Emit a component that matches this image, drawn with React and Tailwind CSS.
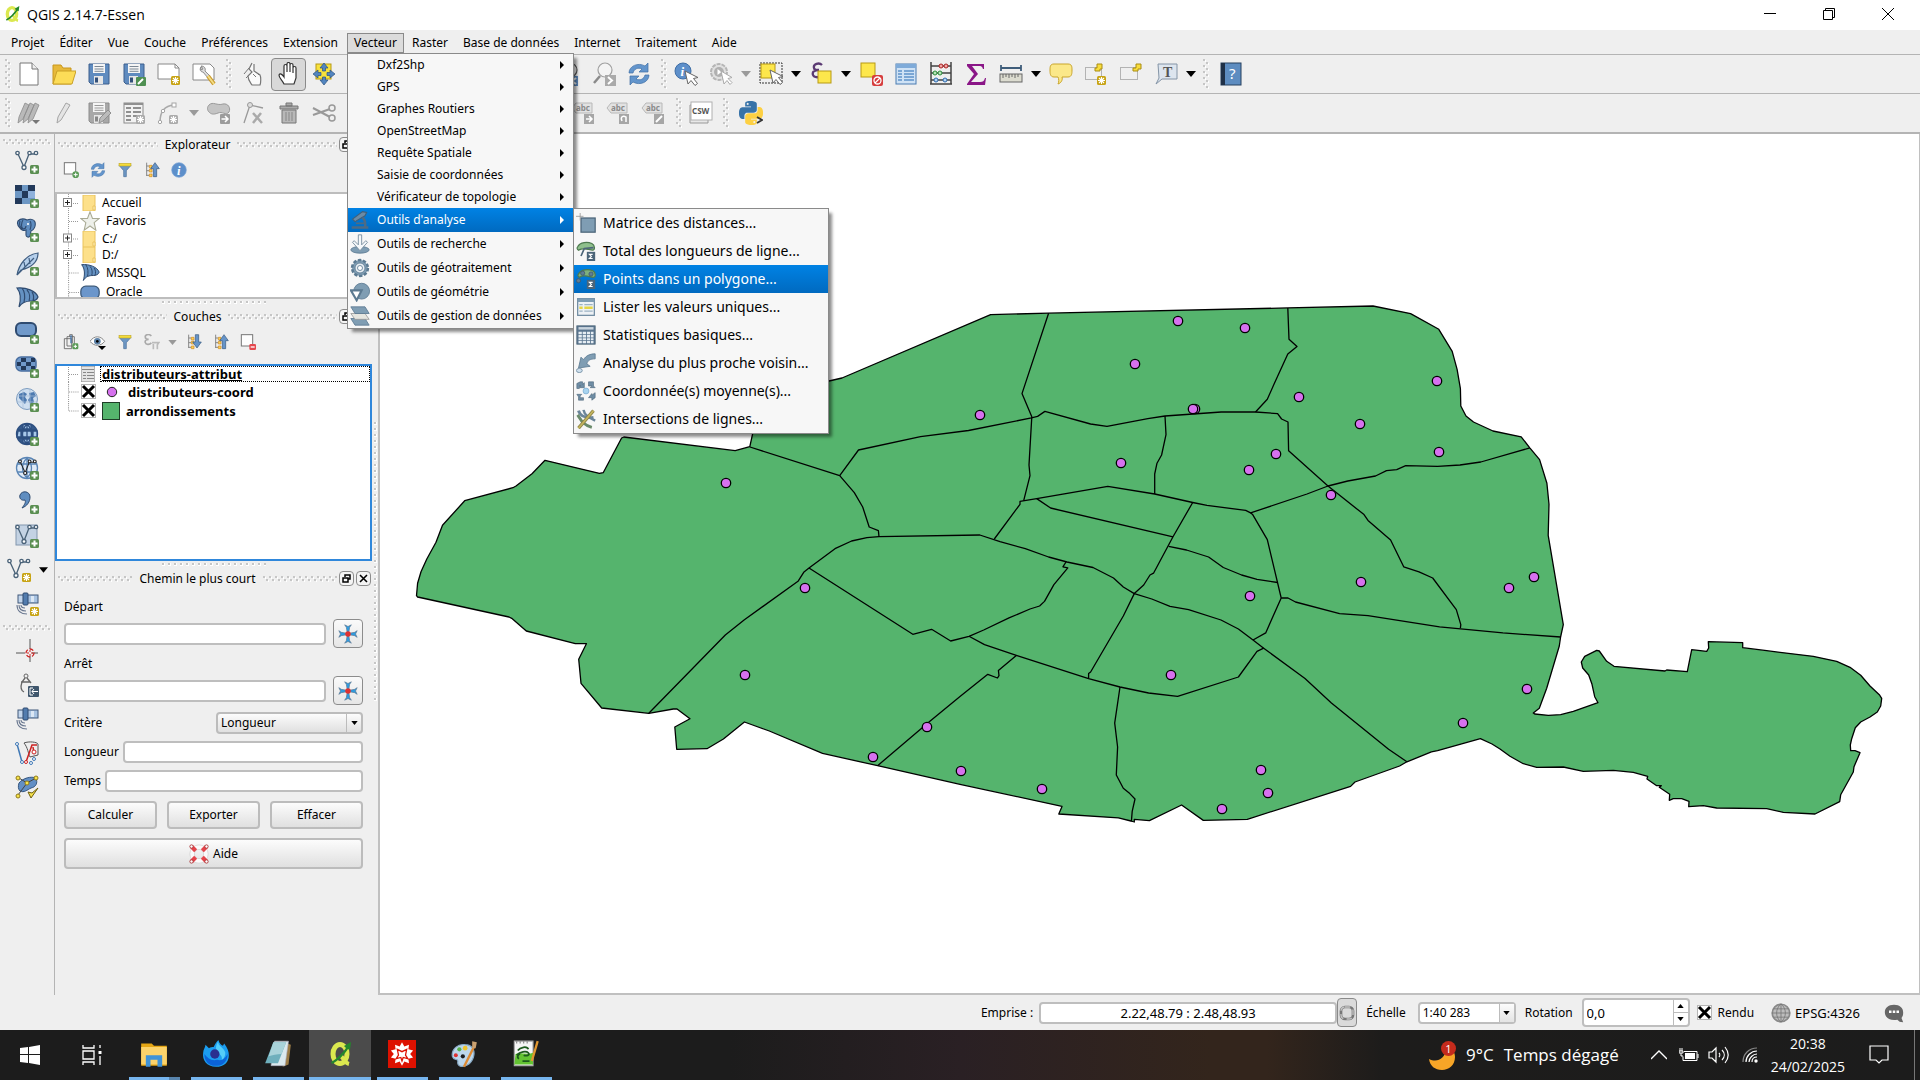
import React from "react";

const UI = "font-['Noto_Sans','Open_Sans',sans-serif]";
const SEGOE = "font-['Open_Sans','Noto_Sans',sans-serif]";

/* ---------- shared drawing helpers ---------- */

function Ic({ children, className = "h-6 w-6", vb = "0 0 24 24" }) {
  return (
    <svg viewBox={vb} className={`shrink-0 ${className}`} fill="none" aria-hidden="true">
      {children}
    </svg>
  );
}

function PatternDefs() {
  return (
    <svg className="absolute h-0 w-0" aria-hidden="true">
      <defs>
        <pattern id="grip" width="6" height="6" patternUnits="userSpaceOnUse">
          <rect x="0" y="0" width="2" height="2" fill="#c6c6c6" />
          <rect x="2" y="1" width="1" height="2" fill="#fff" />
          <rect x="3" y="3" width="2" height="2" fill="#c6c6c6" />
          <rect x="5" y="4" width="1" height="2" fill="#fff" />
        </pattern>
        <pattern id="dots" width="6" height="6" patternUnits="userSpaceOnUse">
          <rect x="0" y="1" width="3" height="3" fill="#fff" />
          <rect x="0" y="1" width="2" height="2" fill="#c6c6c6" />
        </pattern>
      </defs>
    </svg>
  );
}

function Fill({ id, className }) {
  return (
    <svg className={className} aria-hidden="true">
      <rect width="100%" height="100%" fill={`url(#${id})`} />
    </svg>
  );
}

const Plus = ({ x = 15, y = 15 }) => (
  <g transform={`translate(${x} ${y})`}>
    <rect width="9" height="9" rx="1.5" fill="#5b8f52" />
    <path d="M4.5 1.5v6M1.5 4.5h6" stroke="#fff" strokeWidth="2" />
  </g>
);
const Star = ({ x = 15, y = 15, c = "#c8a415" }) => (
  <g transform={`translate(${x} ${y})`}>
    <rect width="9" height="9" rx="1.5" fill={c} />
    <path d="M4.5 1v7M1 4.5h7M2 2l5 5M7 2l-5 5" stroke="#fff" strokeWidth="1.1" />
  </g>
);
const GoArrow = ({ x = 14, y = 14, c = "#9c9c9c" }) => (
  <g transform={`translate(${x} ${y})`}>
    <rect width="10" height="10" rx="1" fill={c} />
    <path d="M1.5 5h6M5 2l3 3-3 3" stroke="#fff" strokeWidth="1.5" />
  </g>
);
const Cursor = ({ x = 10, y = 9 }) => (
  <path transform={`translate(${x} ${y})`} d="M0 0l3 13 3-3.500 4 5 2.500-2-4-5 4.500-1z" fill="#fff" stroke="#666" strokeWidth="1" />
);
const Refresh = () => (
  <g fill="#6395cc" stroke="#3f6ea5" strokeWidth=".7">
    <path d="M2 11C2 4 11 0 18 4l3-3v9h-9l3-3C11 5 7 7 6 11z" />
    <path d="M22 13c0 7-9 11-16 7l-3 3v-9h9l-3 3c4 2 8 0 9-4z" />
  </g>
);
const VNodes = ({ c = "#4a6278" }) => (
  <g stroke={c} strokeWidth="1.3" fill="#fff">
    <path d="M3 4l6 13 5-13h7" fill="none" />
    <circle cx="2.5" cy="3" r="1.7" />
    <circle cx="9" cy="17.5" r="2" />
    <circle cx="14.5" cy="3" r="1.7" />
    <circle cx="21" cy="3" r="1.7" />
  </g>
);
const Funnel = () => (
  <g>
    <path d="M3 5h18l-7 8v9h-4v-9z" fill="#6d97c4" stroke="#4a6f9c" />
    <rect x="3" y="2" width="18" height="4" fill="#f4dc3c" stroke="#b9a01c" strokeWidth=".8" />
  </g>
);
const TreeArrow = ({ down }) => (
  <g>
    <path d="M4 1v20M4 6h4M4 13h4M4 20h4" stroke="#777" strokeWidth="1.3" />
    <path d="M8 5h4v4H8zM8 11h4v4H8zM8 18h4v4H8z" fill="#fbd25a" stroke="#d28a1c" />
    {down ? (
      <path d="M14 1h5v11h4l-6.500 9L10 12h4z" fill="#6694c8" stroke="#35577f" />
    ) : (
      <path d="M14 22h5V10h4L16.500 1 10 10h4z" fill="#6694c8" stroke="#35577f" />
    )}
  </g>
);
const Satellite = ({ children }) => (
  <g>
    <rect x="3" y="3" width="6" height="8" fill="#c3d6ec" stroke="#41597a" />
    <rect x="12" y="3" width="11" height="8" fill="#a8c3e2" stroke="#41597a" />
    <rect x="16" y="4" width="3" height="6" fill="#dbe7f4" />
    <rect x="8" y="1" width="5" height="12" rx="1" fill="#527cae" stroke="#2f4b70" />
    <path d="M10 16c-3 0-4-1-4-3M11 19c-5 0-7-2-7-6M12 22c-6 0-10-3-10-9" stroke="#6a7890" strokeWidth="1.1" />
    {children}
  </g>
);
const Lens = ({ c = "#8a8a8a", h = "#a0a0a0" }) => (
  <g>
    <circle cx="13" cy="8" r="7" fill="#f4f4f4" stroke={h} strokeWidth="1.2" />
    <path d="M8 14l-6 7" stroke={c} strokeWidth="2.5" />
  </g>
);
const Elephant = () => (
  <g stroke="#2f4b70" strokeWidth="1.1">
    <path d="M3 3c3-3 7-2 9-1 3-1 7-1 8 2 1 4-1 8-4 9l-1 5c-1 2-4 1-4-1v-5c-2 1-5 0-6-2-2-2-3-5-2-7z" fill="#5f8dc0" />
    <path d="M8 2c-2 3-2 7 0 9 2 0 3-1 3-3M15 3c2 3 1 6 0 9M5 3c-1 3 0 6 2 8" fill="none" />
    <circle cx="13" cy="6" r="1" fill="#fff" stroke="none" />
  </g>
);
const Sail = () => (
  <path d="M2 2c9-1 19 3 21 9-1 3-4 4-7 4-5 0-9 1-12 6C6 14 6 7 2 2zM7 2c3 4 3 10 2 14M12 4c3 3 3 8 2 11M17 6c2 3 2 6 1 9" fill="#6491c2" stroke="#2f4b70" strokeWidth="1.2" />
);
const Globe = ({ dark }) => (
  <g stroke={dark ? "#2d4f80" : "#5a85b5"} strokeWidth="1.3">
    <circle cx="12" cy="12" r="10.5" fill={dark ? "#35598a" : "#dfeaf6"} />
    {dark && <path d="M8 3c2-1 6-1 8 0v4H8zM7 9h10v6H7zM3 9h3v6H2zM18 9h4v6h-4zM8 17h8v4H8z" fill="#a7c8ea" />}
    <path d="M2 8h20M2 16h20M12 2v20M12 2c-6 6-6 14 0 20M12 2c6 6 6 14 0 20" />
  </g>
);
const Disk = ({ g }) => (
  <g>
    <path d="M2 2h20v20H4l-2-2z" fill={g ? "#a8a8a8" : "#5f8bbf"} stroke={g ? "#8c8c8c" : "#3c5f8d"} />
    <rect x="6" y="2" width="12" height="9" fill="#f5f5f5" />
    <path d="M7.500 4.500h9M7.500 7h9M7.500 9.300h9" stroke={g ? "#999" : "#7b8794"} />
    <rect x="7" y="14" width="9" height="8" fill="#e6e6e6" />
    <rect x="8" y="15.5" width="3" height="5" fill={g ? "#888" : "#33507a"} />
  </g>
);
const AbcTag = ({ children }) => (
  <Ic vb="0 0 26 26" className="h-[26px] w-[26px]">
    <path d="M1 8l4-5h16v10H5z" fill="#e2e2e2" stroke="#b8b8b8" />
    <text x="5" y="11" fontSize="8" fontWeight="bold" fill="#8a8a8a" fontFamily="Noto Sans, sans-serif">abc</text>
    <rect x="13" y="14" width="10" height="10" fill="#a6a6a6" />
    {children}
  </Ic>
);

/* ---------- toolbar pieces ---------- */

function Tool({ label, active, children }) {
  return (
    <button
      type="button"
      title={label}
      aria-label={label}
      className={
        active
          ? "flex h-[33px] w-[35px] shrink-0 items-center justify-center rounded-sm border border-[#8a8a8a] bg-[#d8d8d8]"
          : "flex h-[33px] w-[35px] shrink-0 items-center justify-center"
      }
    >
      {children}
    </button>
  );
}

function Drop({ gray, label = "Options" }) {
  return (
    <button type="button" aria-label={label} className="flex h-[33px] w-[15px] shrink-0 items-center justify-center">
      <svg viewBox="0 0 10 6" className="h-[6px] w-[10px]">
        <path d="M0 0h10L5 6z" fill={gray ? "#9a9a9a" : "#000"} />
      </svg>
    </button>
  );
}

function Grip({ wide, first }) {
  return (
    <div className={wide ? "flex w-[15px] shrink-0 justify-end pr-1" : first ? "flex w-[11px] shrink-0 justify-end" : "flex w-3 shrink-0 justify-end pr-px"}>
      <Fill id="grip" className="h-[30px] w-[6px]" />
    </div>
  );
}

function ToolbarOne() {
  return (
    <div className="flex h-[39px] items-center border-t border-[#b4b4b4]">
      <Grip first />
      <Tool label="Nouveau"><Ic><path d="M3 1h12l6 6v16H3z" fill="#fff" stroke="#777" /><path d="M15 1v6h6" fill="#eee" stroke="#777" /></Ic></Tool>
      <Tool label="Ouvrir"><Ic><path d="M1 3h8l2 3h8v16H1z" fill="#e7b93b" stroke="#c9971d" /><path d="M5 9h19l-4 13H1z" fill="#fcdc57" stroke="#c9a027" /></Ic></Tool>
      <Tool label="Enregistrer"><Ic><Disk /></Ic></Tool>
      <Tool label="Enregistrer sous"><Ic><Disk /><rect x="14" y="15" width="10" height="9" rx="1" fill="#4f9052" /><path d="M16 22l5-5" stroke="#fff" strokeWidth="2" /></Ic></Tool>
      <Tool label="Nouveau composeur"><Ic><path d="M1 2h17l4 4v11H1z" fill="#fff" stroke="#888" /><path d="M18 2v4h4" stroke="#888" /><Star x={14} y={14} /></Ic></Tool>
      <Tool label="Gestionnaire de composeurs"><Ic><path d="M1 2h17l4 4v12H1z" fill="#fff" stroke="#888" /><path d="M9 5c-2 3 0 5 2 5l5 6 2-2-5-5c1-3-1-5-4-5l2 3-2 1z" fill="#ddd" stroke="#777" strokeWidth=".8" /><path d="M16 14l6 8" stroke="#c99a2d" strokeWidth="4" /><path d="M16 14l6 8" stroke="#f3dc84" strokeWidth="2" /></Ic></Tool>
      <Grip wide />
      <Tool label="Toucher"><Ic><path d="M10 1l-3 6 3 3-4 4c0 4 2 6 4 9h8c1-3 1-8 0-10l-6-4V2" fill="#fafafa" stroke="#777" strokeWidth="1.2" /><path d="M2 12l5-6M4 16l3-3M11 12l3 3M14 10l3 3" stroke="#777" /></Ic></Tool>
      <Tool label="Se déplacer dans la carte" active><Ic><path d="M7 22c-2-4-5-6-5-9 1-2 3-1 5 2V4c0-2 3-2 3 0v6-8c0-2 3-2 3 0v8-7c0-2 3-2 3 0v8-5c0-2 3-2 3 0v10l-2 6z" fill="#fff" stroke="#333" strokeWidth="1.2" /></Ic></Tool>
      <Tool label="Déplacer vers la sélection"><Ic><rect x="4" y="2" width="15" height="15" fill="#f8e23c" stroke="#b79a14" /><g fill="#5285c0" stroke="#2d517e" strokeWidth=".7"><path d="M12 1l4 5h-2.500v3h-3V6H8zM12 23l4-5h-2.500v-3h-3v3H8zM1 12l5-4v2.500h3v3H6V16zM23 12l-5-4v2.500h-3v3h3V16z" /></g></Ic></Tool>
      <Tool label="Zoom +"><Ic><Lens /></Ic></Tool>
      <Tool label="Zoom -"><Ic><Lens /></Ic></Tool>
      <Tool label="Zoom à la résolution native"><Ic><Lens /></Ic></Tool>
      <Tool label="Zoom sur l'étendue"><Ic><Lens /></Ic></Tool>
      <Tool label="Zoom sur la sélection"><Ic><Lens /></Ic></Tool>
      <Tool label="Zoom sur la couche"><Ic><Lens /></Ic></Tool>
      <Tool label="Zoom précédent"><Ic><Lens h="#555" /><rect x="11" y="14" width="10" height="10" fill="#5b87ba" /><path d="M19 16l-4 3 4 3" stroke="#fff" strokeWidth="2" /></Ic></Tool>
      <Tool label="Zoom suivant"><Ic><Lens /><rect x="13" y="13" width="11" height="11" fill="#aaa" /><path d="M16 15l4 3.500-4 3.500" stroke="#fff" strokeWidth="2" /></Ic></Tool>
      <Tool label="Rafraîchir"><Ic><Refresh /></Ic></Tool>
      <Grip />
      <Tool label="Identifier les entités"><Ic><circle cx="9" cy="9" r="8" fill="#5d8fca" stroke="#3f6ea5" /><text x="6.5" y="14" fontSize="13" fontStyle="italic" fontWeight="bold" fill="#fff" fontFamily="Liberation Serif, serif">i</text><Cursor x={11} y={9} /></Ic></Tool>
      <Tool label="Exécuter une action"><Ic><circle cx="10" cy="10" r="8" fill="#e0e0e0" stroke="#b5b5b5" strokeWidth="2" strokeDasharray="4 1" /><circle cx="10" cy="10" r="5" fill="#b0b0b0" /><path d="M8.500 7l4 3-4 3z" fill="#fff" /><path d="M12 9l3 13 3-3.500 3 4 2-2-4-4 4-1z" fill="#fff" stroke="#aaa" /></Ic></Tool>
      <Drop gray />
      <Tool label="Sélectionner des entités"><Ic><rect x="1" y="1" width="22" height="20" stroke="#333" strokeDasharray="2 1" /><rect x="2" y="2" width="14" height="14" fill="#fde74c" stroke="#b79a14" /><Cursor x={11} y={8} /></Ic></Tool>
      <Drop />
      <Tool label="Sélection par expression"><Ic><path d="M13 3c-3-3-9-1-8 3 0 2 2 2 5 2-5 0-7 2-6 5 1 3 7 3 9 0" stroke="#5b3a73" strokeWidth="2.3" /><rect x="9" y="9" width="13" height="12" fill="#fde74c" stroke="#b79a14" /></Ic></Tool>
      <Drop />
      <Tool label="Désélectionner"><Ic><rect x="2" y="1" width="14" height="14" fill="#fde74c" stroke="#b79a14" /><rect x="13" y="13" width="11" height="11" rx="2" fill="#d63d3d" /><circle cx="18.5" cy="18.5" r="3.5" stroke="#fff" strokeWidth="1.3" /><path d="M16 21l5-5" stroke="#fff" strokeWidth="1.3" /></Ic></Tool>
      <Tool label="Table d'attributs"><Ic><rect x="2" y="2" width="20" height="20" fill="#cfe2f5" stroke="#4a7cb2" /><rect x="2" y="2" width="20" height="4" fill="#7fabd9" /><path d="M4 9h4M10 9h10M4 12h4M10 12h10M4 15h4M10 15h10M4 18h4M10 18h10" stroke="#5f93c9" strokeWidth="1.5" /></Ic></Tool>
      <Tool label="Calculatrice de champ"><Ic><path d="M2 0v22M22 0v22M1 22h22M2 4h20M2 11h20M2 18h20" stroke="#444" strokeWidth="1.5" /><g stroke="#a22" fill="#f3a5a5"><circle cx="12" cy="4" r="2" /><circle cx="17" cy="4" r="2" /></g><g stroke="#2b8a3b" fill="#b6e4b6"><circle cx="6" cy="11" r="2" /><circle cx="11" cy="11" r="2" /></g><g stroke="#2d6bb0" fill="#b4d2f0"><circle cx="7" cy="18" r="2" /><circle cx="16" cy="18" r="2" /></g></Ic></Tool>
      <Tool label="Résumé statistique"><Ic><path d="M3 2h17v5h-1c-1-3-2-3-4-3H8l6 8-7 8h9c3 0 4-1 5-4h1l-1 7H3v-1l7-10-7-8z" fill="#8a1687" /></Ic></Tool>
      <Tool label="Mesurer une longueur"><Ic><path d="M2 6h20M2 3v6M22 3v6" stroke="#3f5d7a" strokeWidth="1.8" /><rect x="1" y="12" width="22" height="8" fill="#dcdcd0" stroke="#666" /><path d="M4 12v4M7 12v3M10 12v4M13 12v3M16 12v4M19 12v3" stroke="#666" /></Ic></Tool>
      <Drop />
      <Tool label="Infobulles"><Ic><path d="M5 2h14c4 0 4 3 4 6s0 7-4 7h-6c1 3-1 6-4 7 1-2 1-5 0-7H5c-4 0-4-4-4-7s0-6 4-6z" fill="#fbe889" stroke="#c9a52b" /></Ic></Tool>
      <Tool label="Nouveau signet"><Ic><rect x="1.5" y="5.5" width="16" height="12" stroke="#777" strokeDasharray="1 1" /><path d="M13 2h5v5h-2v2h-5V6h2z" fill="#f8dd3c" stroke="#a98c12" /><Star x={13} y={14} /></Ic></Tool>
      <Tool label="Montrer les signets"><Ic><rect x="1.5" y="5.5" width="17" height="12" stroke="#777" strokeDasharray="1 1" /><path d="M17 2h5v5h-3v2h-5V6h3z" fill="#f8dd3c" stroke="#a98c12" /></Ic></Tool>
      <Tool label="Annotation de texte"><Ic><path d="M4 2h19v15H8l-6 5 3-6z" fill="#dde5ee" stroke="#8494a6" /><text x="9" y="15" fontSize="14" fontWeight="bold" fill="#555" fontFamily="Liberation Serif, serif">T</text></Ic></Tool>
      <Drop />
      <Grip wide />
      <Tool label="Contenu de l'aide"><Ic><rect x="2" y="1" width="20" height="22" fill="#5d8cc0" stroke="#27405f" /><rect x="2" y="1" width="4" height="22" fill="#1f3047" /><text x="10" y="17" fontSize="15" fill="#fff" fontFamily="Noto Sans, sans-serif">?</text></Ic></Tool>
    </div>
  );
}

const PY = "M14.25.18l.9.2.73.26.59.3.45.32.34.34.25.34.16.33.1.3.04.26.02.2-.01.13V8.5l-.05.63-.13.55-.21.46-.26.38-.3.31-.33.25-.35.19-.35.14-.33.1-.3.07-.26.04-.21.02H8.77l-.69.05-.59.14-.5.22-.41.27-.33.32-.27.35-.2.36-.15.37-.1.35-.07.32-.04.27-.02.21v3.06H3.17l-.21-.03-.28-.07-.32-.12-.35-.18-.36-.26-.36-.36-.35-.46-.32-.59-.28-.73-.21-.88-.14-1.05-.05-1.23.06-1.22.16-1.04.24-.87.32-.71.36-.57.4-.44.42-.33.42-.24.4-.16.36-.1.32-.05.24-.01h.16l.06.01h8.16v-.83H6.18l-.01-2.75-.02-.37.05-.34.11-.31.17-.28.25-.26.31-.23.38-.2.44-.18.51-.15.58-.12.64-.1.71-.06.77-.04.84-.02 1.27.05zm-6.3 1.98l-.23.33-.08.41.08.41.23.34.33.22.41.09.41-.09.33-.22.23-.34.08-.41-.08-.41-.23-.33-.33-.22-.41-.09-.41.09z";

function ToolbarTwo() {
  return (
    <div className="flex h-[41px] items-center border-t border-b-2 border-[#b4b4b4]">
      <Grip first />
      <Tool label="Modifications en cours"><Ic><g fill="#b9b9b9" stroke="#8c8c8c" strokeWidth=".8"><path d="M1 22l1-6L8 2l4 2-6 14zM6 22l1-6 6-14 4 2-6 14zM11 22l1-6 6-14 4 2-6 14z" /></g><path d="M15 19h8l-4 4z" fill="#777" /></Ic></Tool>
      <Tool label="Basculer en mode édition"><Ic><path d="M5 22l1-6L14 2l4 2-9 15z" fill="#e4e4e4" stroke="#a5a5a5" /></Ic></Tool>
      <Tool label="Enregistrer les modifications"><Ic><Disk g /><path d="M12 22l1-5 8-8 3 3-8 8z" fill="#bbb" stroke="#8f8f8f" /></Ic></Tool>
      <Tool label="Ajouter une entité"><Ic><rect x="2" y="2" width="19" height="20" fill="#f2f2f2" stroke="#8c8c8c" /><path d="M2 3h19M4 7h5M11 7h8M4 11h5M11 11h8M4 15h5M11 15h4M4 19h5" stroke="#909090" strokeWidth="1.8" /><Star x={14} y={14} c="#ababab" /></Ic></Tool>
      <Tool label="Ajouter une chaîne circulaire"><Ic><path d="M3 21c0-9 3-16 14-17" stroke="#aaa" strokeWidth="1.5" /><g fill="#fff" stroke="#a5a5a5"><circle cx="3" cy="21" r="1.7" /><circle cx="6" cy="10" r="1.7" /><rect x="15" y="2" width="4" height="4" /></g><Star x={12} y={14} c="#ababab" /></Ic></Tool>
      <Drop gray />
      <Tool label="Déplacer l'entité"><Ic><path d="M2 4c4-4 8 1 14-1 5-1 8 4 6 8-3 4-7-1-11 1-5 2-7 1-9-1s-2-5 0-7z" fill="#c4c4c4" stroke="#999" /><GoArrow x={13} y={13} /></Ic></Tool>
      <Tool label="Outil de nœud"><Ic><path d="M2 22L8 4l13 3" stroke="#999" strokeWidth="1.3" /><circle cx="8" cy="4" r="2.5" fill="#ddd" stroke="#999" /><path d="M11 12l9 10M19 12l-8 10" stroke="#aaa" strokeWidth="2.5" /></Ic></Tool>
      <Tool label="Supprimer"><Ic><path d="M3 5h18v3H3zM9 2h6v3H9z" fill="#aaa" stroke="#777" /><path d="M5 9h14v13H5z" fill="#b8b8b8" stroke="#777" /><path d="M9 11v9M12 11v9M15 11v9" stroke="#888" /></Ic></Tool>
      <Tool label="Couper"><Ic><path d="M1 7l17 9M1 14l17-6" stroke="#999" strokeWidth="2" /><g stroke="#999" strokeWidth="1.5"><circle cx="20" cy="7" r="3" /><circle cx="20" cy="17" r="3" /></g></Ic></Tool>
      <Tool label="Copier" />
      <Tool label="Coller" />
      <Grip wide />
      <Tool label="Étiquetage" />
      <Tool label="Options d'étiquetage" />
      <Tool label="Épingler les étiquettes" />
      <Tool label="Afficher les étiquettes" />
      <Tool label="Déplacer une étiquette"><AbcTag><path d="M15 19h6M18 16l3 3-3 3" stroke="#fff" strokeWidth="1.5" /></AbcTag></Tool>
      <Tool label="Pivoter une étiquette"><AbcTag><path d="M16 21c-2-4 1-6 4-4v5" stroke="#fff" strokeWidth="1.5" /></AbcTag></Tool>
      <Tool label="Modifier une étiquette"><AbcTag><path d="M15 22l6-6" stroke="#fff" strokeWidth="2" /></AbcTag></Tool>
      <Grip />
      <Tool label="MetaSearch"><Ic><path d="M1 22V4h18v18z" fill="#e8e8e8" stroke="#999" /><rect x="2" y="1" width="21" height="18" fill="#fff" stroke="#b0b0b0" /><text x="3" y="13" fontSize="8" fontWeight="bold" fill="#555" fontFamily="Noto Sans, sans-serif">CSW</text></Ic></Tool>
      <Grip wide />
      <Tool label="Console Python"><Ic><path d={PY} fill="#3873a8" /><path d={PY} fill="#fdd043" transform="rotate(180 12 12)" /><path d="M18 16l5 3-5 3" stroke="#333" strokeWidth="1.8" /></Ic></Tool>
    </div>
  );
}

const sideTools = [
  ["Ajouter une couche vecteur", <><VNodes /><Plus /></>],
  ["Ajouter une couche raster", <><rect width="20" height="19" x="0" y="1" fill="#6d97c4" /><path d="M0 1h7v6H0zM13 1h7v6h-7zM7 7h6v7H7zM0 14h7v6H0z" fill="#22395a" /><path d="M13 7h7v7h-7z" fill="#8fb2dc" /><Plus /></>],
  ["Ajouter une couche PostGIS", <><Elephant /><Plus /></>],
  ["Ajouter une couche SpatiaLite", <><path d="M2 23C4 12 12 2 23 1c0 8-5 14-17 17zM2 23L19 6M9 10l1 5M14 6l1 6" fill="#b5cfeb" stroke="#3f5d80" strokeWidth="1.2" /><Plus /></>],
  ["Ajouter une couche MSSQL", <><Sail /><Plus /></>],
  ["Ajouter une couche Oracle", <><rect x="1" y="3" width="20" height="13" rx="5" fill="#7099ca" stroke="#2f4b70" strokeWidth="2" /><Plus /></>],
  ["Ajouter un raster Oracle", <><rect x="1" y="3" width="20" height="14" rx="5" fill="#7099ca" stroke="#4a6fa0" strokeWidth="1.5" /><path d="M6 4h5v4H6zM16 4h4v4h-4zM11 8h5v4h-5zM2 8h4v4H2zM6 12h5v4H6zM16 12h4v3h-4z" fill="#22395a" /><Plus /></>],
  ["Ajouter une couche WMS", <><circle cx="12" cy="11" r="10.5" fill="#cfdff0" stroke="#7d9cbf" /><path d="M4 6l5-2 3 2-2 3 2 3-2 4-3-3-3-3zM14 5l5-1 2 4-3 2 1 4-3 3-3-5 2-3z" fill="#4d7ab0" /><path d="M2 8h20M2 14h20M8 1v20M15 1v20" stroke="#a9bfd8" strokeWidth=".7" /><Plus /></>],
  ["Ajouter une couche WCS", <><Globe dark /><Plus /></>],
  ["Ajouter une couche WFS", <><Globe /><g transform="translate(3 3) scale(.8)"><VNodes c="#222" /></g><Plus /></>],
  ["Ajouter une couche de texte délimité", <><path d="M5 5c2-5 10-4 10 2 0 5-3 9-8 11 3-4 4-6 3-8-4 1-6-2-5-5z" fill="#5f8dc0" stroke="#2f4b70" /><Plus /></>],
  ["Ajouter une couche virtuelle", <><rect x="1" y="1" width="21" height="20" fill="#c3d2e3" stroke="#8296ad" /><VNodes /><Plus /></>],
];
const sideTools2 = [
  ["Capture de coordonnées", <><path d="M1 14h9M17 14h6M15 0v10M15 17v6" stroke="#555" /><circle cx="15" cy="14" r="4" stroke="#c22" strokeDasharray="4 2" strokeWidth="1.3" /><path d="M12 14h6M15 11v6" stroke="#c22" strokeDasharray="2 2" /></>],
  ["Dxf2Shp", <><circle cx="11" cy="3" r="2" stroke="#666" /><path d="M10 5L7 9c-2 6 0 9 2 10M12 5l4 5M6 9h9" stroke="#666" strokeWidth="1.3" /><rect x="13" y="13" width="11" height="11" rx="1" fill="#3f566c" /><path d="M18 15h-3v7h3M17 18.500h6M19 16l-2 2.500 2 2.500" stroke="#fff" /></>],
  ["Outils GPS", <Satellite />],
  ["Édition topologique", <><path d="M2 3l5 18" stroke="#3f78b5" strokeWidth="1.5" /><path d="M9 2c5-2 13-1 14 1v11l-8 2c-2-4-2-9-6-14z" fill="#eee" stroke="#555" /><path d="M11 21l6-17 5 0M19 13l-1-7" stroke="#c22" strokeWidth="1.5" /><g fill="#fff" stroke="#3f78b5"><circle cx="2" cy="3" r="1.5" /><circle cx="7" cy="21" r="1.5" /><circle cx="19" cy="18" r="1.5" /><circle cx="16" cy="22" r="1.5" /></g><circle cx="11" cy="21" r="1.5" stroke="#c22" fill="#fff" /><circle cx="19" cy="11" r="2" stroke="#c22" fill="#fff" /></>],
  ["Vérificateur de topologie", <><path d="M4 8c4-5 12-7 17-5 2 5 0 9-5 10-4 2-7 5-11 3-2-2-2-5-1-8z" fill="#628fc4" stroke="#34557f" /><path d="M4 3l8 5 9-5M12 8L3 20" stroke="#444" /><g fill="#f7e34a" stroke="#8f7a1a"><circle cx="3" cy="3" r="2" /><circle cx="21" cy="3" r="2" /><circle cx="12" cy="8" r="2" /><circle cx="3" cy="21" r="2" /></g><path d="M13 17l3 6 7-10-6 5z" fill="#f7e34a" stroke="#6d5e12" /></>],
];

function SideButton({ label, children }) {
  return (
    <button type="button" title={label} aria-label={label} className="flex h-[34px] w-full items-center justify-center">
      <Ic>{children}</Ic>
    </button>
  );
}

function SideBar() {
  return (
    <div className="flex w-[55px] shrink-0 flex-col border-r border-[#b4b4b4]">
      <div className="flex h-[11px] items-end px-[3px]"><Fill id="grip" className="h-[6px] w-full" /></div>
      {sideTools.map(([l, g]) => <SideButton key={l} label={l}>{g}</SideButton>)}
      <div className="flex items-center pl-[7px]">
        <button type="button" aria-label="Nouvelle couche" className="flex h-[34px] items-center"><Ic><VNodes /><Star x={15} y={15} /></Ic></button>
        <button type="button" aria-label="Types de nouvelle couche" className="flex h-[34px] items-center pl-2"><svg viewBox="0 0 10 6" className="h-[6px] w-[9px]"><path d="M0 0h10L5 6z" /></svg></button>
      </div>
      <SideButton label="Créer une couche GPX"><Satellite><Star /></Satellite></SideButton>
      <div className="flex h-[13px] items-center px-[3px]"><Fill id="grip" className="h-[6px] w-full" /></div>
      {sideTools2.map(([l, g]) => <SideButton key={l} label={l}>{g}</SideButton>)}
    </div>
  );
}

/* ---------- docks ---------- */

const dockBtn = "flex h-[15px] w-[15px] items-center justify-center rounded-sm border border-[#8c8c8c] bg-[#f4f4f4]";

function DockTitle({ children }) {
  return (
    <div className="flex h-[21px] items-center gap-[2px] pl-[3px] pr-px">
      <Fill id="grip" className="h-[6px] w-0 flex-1" />
      <h2 className="px-[5px] text-[12px] leading-4">{children}</h2>
      <Fill id="grip" className="h-[6px] w-0 flex-1" />
      <button type="button" aria-label="Détacher" className={dockBtn}>
        <svg viewBox="0 0 9 9" className="h-[9px] w-[9px]" fill="none" stroke="#000"><path d="M3 3V1h5v4H6" strokeWidth="1.5" /><path d="M1 4h5v4H1z" strokeWidth="1.5" /></svg>
      </button>
      <button type="button" aria-label="Fermer" className={dockBtn}>
        <svg viewBox="0 0 9 9" className="h-[9px] w-[9px]" stroke="#000" strokeWidth="1.6"><path d="M1 1l7 7M8 1L1 8" /></svg>
      </button>
    </div>
  );
}

function Splitter() {
  return <div className="flex h-[7px] items-center justify-center"><Fill id="dots" className="h-[5px] w-[104px]" /></div>;
}

function MiniTool({ label, children }) {
  return (
    <button type="button" title={label} aria-label={label} className="flex h-[27px] w-[27px] items-center justify-center">
      <Ic className="h-4 w-4">{children}</Ic>
    </button>
  );
}

const Folder = () => (
  <svg viewBox="0 0 14 16" className="ml-[3px] h-4 w-[14px]"><path d="M1 0h12v16H1z" fill="#fde08a" stroke="#eac35c" /><path d="M11 11h2v4h-2z" fill="#fff3c4" stroke="#eac35c" /></svg>
);
const explorer = [
  ["Accueil", true, "h-[18px]", <Folder />],
  ["Favoris", false, "h-[18px]", <Ic className="h-5 w-5"><path d="M12 1l3 8h8l-6 5 2 9-7-5-7 5 2-9-6-5h8z" fill="#eef0ea" stroke="#a9aa94" strokeWidth="1.3" /></Ic>],
  ["C:/", true, "h-[17px]", <Folder />],
  ["D:/", true, "h-4", <Folder />],
  ["MSSQL", false, "h-[19px]", <Ic className="h-5 w-5"><Sail /></Ic>],
  ["Oracle", false, "h-5", <Ic className="h-5 w-5"><rect x="1" y="5" width="22" height="15" rx="6" fill="#6b96cb" stroke="#3b5878" strokeWidth="1.5" /></Ic>],
];

function Branch({ open, last }) {
  return (
    <svg viewBox="0 0 22 18" className="h-full w-[22px] shrink-0" preserveAspectRatio="xMidYMid slice" fill="none">
      <path d={last ? "M11.500 0v9" : "M11.500 0v18"} stroke="#999" strokeDasharray="1 1" />
      <path d="M12 9.500h9" stroke="#999" strokeDasharray="1 1" />
      {open && <><rect x="6.5" y="4.5" width="8" height="8" fill="#fff" stroke="#888" /><path d="M8 8.500h5M10.500 6v5" stroke="#222" /></>}
    </svg>
  );
}

function XCheck({ label, id }) {
  return (
    <span className="relative inline-flex h-[15px] w-[15px] shrink-0">
      <input id={id} type="checkbox" defaultChecked aria-label={label} className="h-[15px] w-[15px] appearance-none border border-[#b5b5b5] bg-white" />
      <svg viewBox="0 0 15 15" className="pointer-events-none absolute inset-0 h-[15px] w-[15px]" stroke="#000" strokeWidth="3"><path d="M2 2l11 11M13 2L2 13" /></svg>
    </span>
  );
}

const field = "min-w-0 rounded-sm border-2 border-[#bebebe] bg-white px-1 text-[12px]";
const pushBtn = "flex items-center justify-center rounded-sm border-2 border-[#bcbcbc] bg-linear-to-b from-[#fcfcfc] to-[#e0e0e0] text-[12px]";

function PickButton({ label }) {
  return (
    <button type="button" aria-label={label} className="flex h-[29px] w-[30px] shrink-0 items-center justify-center rounded-sm border border-[#8c8c8c] bg-linear-to-b from-[#fafafa] to-[#e6e6e6]">
      <Ic className="h-5 w-5"><g stroke="#5c7590" strokeWidth=".8" fill="#2d9be0"><path d="M11 10l-1-6-2-3 4 2 4-2-2 3-1 6zM11 14l-1 6-2 3 4-2 4 2-2-3-1-6zM10 11l-6-1-3-2 2 4-2 4 3-2 6-1zM14 11l6-1 3-2-2 4 2 4-3-2-6-1z" /></g><circle cx="12" cy="12" r="3.3" fill="#e03232" /></Ic>
    </button>
  );
}

function Docks() {
  return (
    <div className="flex w-[317px] shrink-0 flex-col">
      <section>
        <DockTitle>Explorateur</DockTitle>
        <div className="flex h-[30px] items-center pl-[2px]">
          <MiniTool label="Ajouter les couches"><rect x="2" y="1" width="17" height="17" fill="#fdfdfd" stroke="#777" strokeWidth="1.5" /><circle cx="19" cy="19" r="5" fill="#5b9b57" /><path d="M19 16v6M16 19h6" stroke="#fff" strokeWidth="1.5" /></MiniTool>
          <MiniTool label="Rafraîchir"><Refresh /></MiniTool>
          <MiniTool label="Filtrer"><Funnel /></MiniTool>
          <MiniTool label="Tout replier"><TreeArrow /></MiniTool>
          <MiniTool label="Propriétés"><circle cx="12" cy="12" r="11" fill="#5d8fca" stroke="#7ba5d6" /><text x="9" y="19" fontSize="19" fontStyle="italic" fontWeight="bold" fill="#fff" fontFamily="Liberation Serif, serif">i</text></MiniTool>
        </div>
        <ul className="mt-[7px] h-[107px] overflow-hidden border-2 border-[#bdbdbd] bg-white text-[12px] leading-4">
          {explorer.map(([name, open, h, icon]) => (
            <li key={name} className={`flex items-center ${h}`}>
              <Branch open={open} />
              <span className={open ? "flex w-[23px] items-center" : "flex w-[27px] items-center pl-px"}>{icon}</span>
              <span>{name}</span>
            </li>
          ))}
        </ul>
      </section>
      <Splitter />
      <section>
        <DockTitle>Couches</DockTitle>
        <div className="flex h-[30px] items-center pl-[2px]">
          <MiniTool label="Ajouter un groupe"><path d="M2 7h11v15H2zM6 4h11v14H6zM10 4V1h4v13" fill="#f0f0f0" stroke="#666" strokeWidth="1.3" /><path d="M12 2v12" stroke="#4677ad" strokeWidth="2" /><rect x="14" y="14" width="9" height="9" rx="2" fill="#5b9b57" /><path d="M18.500 16v5M16 18.500h5" stroke="#fff" strokeWidth="1.5" /></MiniTool>
          <MiniTool label="Visibilité"><path d="M0 11c6-9 16-9 22 0-6 8-16 8-22 0z" fill="#fff" stroke="#888" strokeWidth="1.5" /><circle cx="11" cy="11" r="5" fill="#5d82a8" /><circle cx="11" cy="11" r="2" fill="#000" /><path d="M12 18h12l-6 6z" fill="#000" /></MiniTool>
          <MiniTool label="Filtrer la légende"><Funnel /></MiniTool>
          <MiniTool label="Filtrer par expression"><path d="M11 3C7-1 1 1 2 5c0 2 2 3 5 3-4 0-6 2-5 5 1 4 7 3 9 0" stroke="#aaa" strokeWidth="2.5" /><path d="M12 13h10l-2 3v7M14 15v8" stroke="#bbb" strokeWidth="2.5" /></MiniTool>
          <button type="button" aria-label="Options du filtre" className="-ml-[3px] flex h-[27px] w-[21px] items-center justify-center"><svg viewBox="0 0 10 6" className="h-[5px] w-[9px]"><path d="M0 0h10L5 6z" fill="#999" /></svg></button>
          <span className="-ml-[3px] flex">
            <MiniTool label="Tout étendre"><TreeArrow down /></MiniTool>
            <MiniTool label="Tout réduire"><TreeArrow /></MiniTool>
            <MiniTool label="Supprimer la couche"><rect x="2" y="1" width="17" height="17" fill="#fdfdfd" stroke="#777" strokeWidth="1.5" /><rect x="14" y="15" width="10" height="9" rx="2" fill="#e4484e" /><path d="M16 19.500h6" stroke="#fff" strokeWidth="2" /></MiniTool>
          </span>
        </div>
        <ul className="mt-[7px] h-[197px] border-2 border-[#2f87db] bg-white text-[13px] font-bold leading-4">
          <li className="flex h-4 items-center">
            <Branch />
            <Ic vb="0 0 14 16" className="ml-[2px] mr-[5px] h-4 w-[14px]"><path d="M0 0h14v16H0z" fill="#e4e4e4" stroke="#888" /><path d="M1 3.500h12M2 6.500h3M6 6.500h7M2 9.500h3M6 9.500h7M2 12.500h3M6 12.500h7" stroke="#888" /></Ic>
            <span className="flex h-4 flex-1 items-center border border-dotted border-black pl-px underline">distributeurs-attribut</span>
          </li>
          <li className="flex h-[19px] items-center">
            <Branch />
            <span className="ml-[2px] mr-[6px] flex"><XCheck label="Afficher distributeurs-coord" /></span>
            <svg viewBox="0 0 26 12" className="h-3 w-[26px]"><circle cx="10" cy="6" r="4.7" fill="#d671ee" stroke="#222" /></svg>
            <span>distributeurs-coord</span>
          </li>
          <li className="flex h-[19px] items-center">
            <Branch last />
            <span className="ml-[2px] mr-[6px] flex"><XCheck label="Afficher arrondissements" /></span>
            <span className="mr-[6px] h-[18px] w-[18px] border border-[#1f3d27] bg-[#55b46d]" />
            <span>arrondissements</span>
          </li>
        </ul>
      </section>
      <Splitter />
      <section>
        <DockTitle>Chemin le plus court</DockTitle>
        <form className="flex flex-col px-[9px] pt-[10px] text-[12px] leading-4" onSubmit={(e) => e.preventDefault()}>
          <label htmlFor="depart">Départ</label>
          <div className="mt-1 flex items-center gap-[7px]">
            <input id="depart" className={`h-[22px] flex-1 ${field}`} />
            <PickButton label="Choisir le départ" />
          </div>
          <label htmlFor="arret" className="mt-2">Arrêt</label>
          <div className="mt-1 flex items-center gap-[7px]">
            <input id="arret" className={`h-[22px] flex-1 ${field}`} />
            <PickButton label="Choisir l'arrêt" />
          </div>
          <div className="mt-[7px] flex items-center justify-between">
            <label htmlFor="critere">Critère</label>
            <span className="relative flex">
              <select id="critere" className="h-[22px] w-[147px] appearance-none rounded-sm border-2 border-[#bcbcbc] bg-linear-to-b from-[#fcfcfc] to-[#e0e0e0] px-[3px] text-[12px] leading-4">
                <option>Longueur</option>
              </select>
              <span className="pointer-events-none absolute inset-y-[2px] right-[2px] flex w-[15px] items-center justify-center border-l border-[#bcbcbc]"><svg viewBox="0 0 8 5" className="h-[4px] w-[7px]"><path d="M0 0h8L4 5z" /></svg></span>
            </span>
          </div>
          <div className="mt-[7px] flex items-center gap-1"><label htmlFor="longueur">Longueur</label><input id="longueur" readOnly className={`h-[22px] flex-1 ${field}`} /></div>
          <div className="mt-[7px] flex items-center gap-1"><label htmlFor="temps">Temps</label><input id="temps" readOnly className={`h-[22px] flex-1 ${field}`} /></div>
          <div className="mt-[9px] grid grid-cols-3 gap-[10px]">
            <button type="button" className={`h-7 ${pushBtn}`}>Calculer</button>
            <button type="button" className={`h-7 ${pushBtn}`}>Exporter</button>
            <button type="button" className={`h-7 ${pushBtn}`}>Effacer</button>
          </div>
          <button type="button" className={`mt-[9px] h-[31px] gap-1 ${pushBtn}`}>
            <Ic className="h-5 w-5"><circle cx="12" cy="12" r="8.5" stroke="#fafafa" strokeWidth="5" /><circle cx="12" cy="12" r="11" stroke="#ccc" strokeWidth=".7" /><circle cx="12" cy="12" r="5.5" stroke="#ccc" strokeWidth=".7" /><g stroke="#e4444a" strokeWidth="5"><path d="M3 3l5 5M21 3l-5 5M3 21l5-5M21 21l-5-5" /></g><g stroke="#a52b2f" fill="#fff"><circle cx="3" cy="3" r="2" /><circle cx="21" cy="3" r="2" /><circle cx="3" cy="21" r="2" /><circle cx="21" cy="21" r="2" /></g></Ic>
            Aide
          </button>
        </form>
      </section>
    </div>
  );
}

/* ---------- map ---------- */

const outline =
  "749.8,446.7 752.8,433 760,410 829,381 842,378 990.6,314.6 1048.6,313.2 1287.8,307.9 1373,306 1410.6,313.6 1438.8,329.3 1452.2,351.4 1457.1,369.3 1460.4,388.6 1460.8,406 1466,416 1473.5,422 1493,431 1521.2,436.8 1529.8,447.9 1539.6,459.6 1546.9,483.2 1549,504.3 1548.2,535.4 1563.3,624.6 1560.6,637 1559.3,646 1546.7,688.3 1539.3,708.3 1533.3,713 1534.7,714 1548.3,715.3 1560.7,714.7 1573.3,711.3 1598,702.7 1594.7,696.7 1592,684.3 1588.7,675 1582.7,668 1581.3,662 1584.7,656.3 1596.7,650.3 1599.3,651 1606.7,661.3 1614,666.3 1665,671 1666.7,670 1687.3,671.7 1691.7,649.7 1706.7,651.3 1708.7,648 1708.3,641.7 1742.7,642.7 1742.7,647.7 1766.7,650.7 1813.3,656.3 1836.7,661.3 1850,667.3 1860.7,675.3 1870,686 1879.3,694.7 1881.7,698.3 1880.7,706 1877.3,712 1870,717 1860.7,722 1855.3,727.7 1851.7,738.7 1850.3,745 1850.7,750.7 1855,750.7 1860,752.7 1854,766.7 1853.3,772 1840.7,794.7 1839.7,801.7 1815,814 1783.3,812.3 1766.7,808.7 1716.7,808 1703.3,805.7 1688.7,806.7 1689,801.3 1681.7,798.7 1673.3,798.7 1669.3,800.3 1669.7,794.3 1659.3,787.3 1661.3,785.7 1656.7,785.7 1647,779 1647.7,776.3 1633.3,772.3 1613.3,770.3 1583.3,771.3 1563.3,767 1536.7,767.3 1523.3,763.7 1510,756.3 1500,749 1492,744 1480.4,738.6 1437.6,750.7 1431.4,751.8 1406.9,761.8 1399.6,766 1355,782 1350.6,786.4 1247.3,819.3 1203.3,820.4 1181.6,805 1149.4,820.7 1134.3,819.3 1134.3,822 1131,821 1118.4,817.9 1058.8,814 1062,806.4 960,784.3 877.6,765.7 822.5,753.3 769.3,731 744.4,722 723.4,739 707,748.7 676.7,749.3 674.8,727 690,718.7 677,709 673.3,709 648.8,713.3 601.7,708 581,683.3 578.7,659.3 586.4,643.7 575.3,643.7 526.3,631 511.7,618.3 509,617 417.6,597 416.5,595.7 417.6,583.3 421,571.7 426.8,559 436,542.3 442.5,525.3 464.7,500.7 512.9,487.7 516,486 532,473.7 545,460.3 599.4,473.3 603.2,472.7 621.6,438 623.9,437 735.2,450.7";

const borders = [
  "750,447 839.7,475.7 854.3,492.7 862.7,507 869.2,527 878.4,530.7 879,536.7",
  "839.7,475.7 858.5,450 920.5,436.7 968.5,430.5 1031.4,417.9 1037.6,416.4 1044.9,411.4 1090.6,424 1107,426.4 1147.8,418.6 1165,416 1221.2,412 1255.5,412 1277.6,413.6 1281.6,419 1288,422 1288.6,450.7 1328,486 1364,514.6 1368,520.4 1390.6,540 1403.7,566.8 1419,571.8 1432.7,578 1456.3,609.6 1460.8,624.6 1460.4,628",
  "1048.6,313.2 1022,393.6 1031.8,416.8 1029,465 1030,475.7 1023.7,500.7",
  "1287.8,307.9 1289,339.3 1297,346.4 1287.8,354 1274.3,383.6 1267.3,399.3 1255.5,412",
  "1165,416 1166,434.6 1161.6,455 1157,463.2 1154.7,474 1154.7,494",
  "994.3,539 1020,504.3 1020,501.4 1036.7,498.6 1107.8,486.4 1154.7,494 1192.7,502.5 1207,505.4 1245.7,510.4 1250.6,512.9 1307,494 1328,486 1347.8,481 1375.5,476 1386.5,470.7 1396.7,469.6 1405.7,465.7 1437.6,466.4 1460,465 1480.8,462 1529.8,447.9",
  "1036.7,498.6 1050.6,508 1173,536.8",
  "1192.7,502.5 1173,536.8 1153.5,573.2 1150,575 1143.7,585 1134.3,593.6 1123.3,616 1090.6,672 1088.6,673.6 1088.6,678.6",
  "1168.6,546.4 1186.5,550 1208.6,557 1223.3,567.5 1241.6,575 1257,579.3 1277.6,582.5",
  "1250.6,512.9 1252.7,514.6 1267.3,539.6 1281.2,598 1265.7,632.9 1253,640",
  "648.8,713.3 725.3,635 744.4,619.7 798,581.3 803.7,572.3 809,568 835,548.7 851.6,541 866.9,537.7 879,536.7 979.8,535 1000,541.7 1025.3,548.6 1048.6,557 1067,562 1093,567.5 1113.5,578 1123.3,587 1134.3,593.6 1151.8,599 1170,606.4 1188.6,609.6 1221,620 1238.4,629 1253,640 1263.7,648.2 1305,678.6 1331.4,702.9 1388.6,749.3 1406.9,761.8",
  "1281.2,598 1288,598 1295.5,602 1339.6,613.6 1368,615.7 1439.6,626.8 1502.9,632.9 1560.6,637",
  "809,568 912.8,634.3 931.6,629.3 950.7,641 969,636.3 983.7,630 1009,617.9 1030,609 1039.6,606 1044.5,601.4 1053.9,584.6 1067.8,567.9 1062.9,566.8 1066,562",
  "969,636.3 984.5,644.6 1016.3,655.4 1088.6,678.6 1120,687 1148.6,693 1177.6,696.4 1238.4,677 1257,651.4 1263.7,648.2",
  "1016.3,655.4 998.4,670.4 999,675.7 997.5,678 987.8,674.3 960,696.4 929.3,721.7 877.6,765.7",
  "1120,687 1114.7,723.2 1117.6,747 1116.3,775 1123.3,788.2 1129.8,793.6 1135,799 1132.2,811.4 1131.4,821.4",
];

const points = [
  [726, 483], [805, 588], [745, 675], [927, 727], [873, 757], [961, 771], [980, 415], [1178, 321], [1245, 328], [1135, 364],
  [1195, 409], [1193, 409], [1121, 463], [1249, 470], [1276, 454], [1299, 397], [1437, 381], [1360, 424], [1439, 452],
  [1331, 495], [1361, 582], [1509, 588], [1534, 577], [1250, 596], [1171, 675], [1527, 689], [1463, 723], [1261, 770],
  [1268, 793], [1222, 809], [1042, 789],
];

function MapCanvas() {
  return (
    <main className="min-w-0 flex-1 border-l-2 border-r border-b-2 border-[#c0c0c0] bg-white">
      <svg viewBox="380 134 1539 859" className="h-full w-full" role="img" aria-label="Carte des arrondissements">
        <g stroke="#000" strokeWidth="1.3" strokeLinejoin="round">
          <polygon points={outline} fill="#55b46d" />
          {borders.map((b) => <polyline key={b} points={b} fill="none" />)}
          {points.map(([x, y]) => <circle key={`${x}-${y}`} cx={x} cy={y} r="4.7" fill="#d671ee" />)}
        </g>
      </svg>
    </main>
  );
}

/* ---------- menus ---------- */

const steel = "#7f9db3";
const menuIcons = {
  analyse: <><path d="M3 11L15 2l5 1-2 4-12 7z" fill="#6b8ba5" stroke="#41607a" strokeWidth="1.3" /><path d="M15 9c3 3 4 7 3 12M2 21h20" stroke="#4d6b84" strokeWidth="3" /><path d="M7 16h10" stroke="#4d6b84" strokeWidth="2" /></>,
  recherche: <><ellipse cx="12" cy="19" rx="11" ry="4" fill={steel} stroke="#5c7a91" /><path d="M10 1h4v12l5-5 2 2-9 10-9-10 2-2 5 5z" fill="#f4f7f9" stroke="#6d8496" /></>,
  geo: <><circle cx="12" cy="12" r="9.5" fill={steel} stroke="#5c7a91" strokeWidth="3" strokeDasharray="4 2" /><circle cx="12" cy="12" r="6" fill="#e8eef3" stroke="#5c7a91" /><circle cx="12" cy="12" r="3" fill="#fff" stroke="#5c7a91" /></>,
  geom: <><circle cx="14" cy="11" r="9.5" fill={steel} stroke="#5c7a91" /><path d="M1 10h13l-6 12z" fill="#fff" stroke="#5c7a91" strokeWidth="2.5" /></>,
  gestion: <><path d="M1 15h17l5 8H6z" fill={steel} stroke="#5c7a91" /><path d="M1 9h17l5 7H6z" fill="#e6e6e0" stroke="#999" /><path d="M1 1h17l5 8H6z" fill={steel} stroke="#5c7a91" /></>,
};
const Sum = () => (<g><rect x="13" y="13" width="10" height="11" fill="#4c6579" /><path d="M20 16h-4l2.500 2.500L16 21h4" stroke="#fff" strokeWidth="1.3" /></g>);
const subMenu = [
  ["Matrice des distances...", <><rect x="6" y="6" width="17" height="17" fill={steel} stroke="#4c6579" strokeWidth="1.5" /><path d="M0 4h9M5 0v9" stroke="#999" /></>],
  ["Total des longueurs de ligne...", <><path d="M2 7c3-6 12-6 17-4 4 2 4 8 1 8-5 0-10-4-17 0-2-1-2-3-1-4z" fill="#8fc08c" stroke="#4e7a50" strokeWidth="1.5" /><path d="M6 18l4-9 11-1" stroke="#4c6579" strokeWidth="2" /><Sum /></>],
  ["Points dans un polygone...", <><path d="M3 6c3-6 12-6 17-4 4 2 4 8 1 8-5 0-10-4-17 0-2-1-2-3-1-4z" fill="#7fb07c" stroke="#4e7a50" strokeWidth="1.5" /><g fill="#5e7d94" stroke="#3e5a70"><circle cx="8" cy="5" r="2.5" /><circle cx="18" cy="6" r="2.5" /><circle cx="3" cy="14" r="2.5" /></g><Sum /></>],
  ["Lister les valeurs uniques...", <><rect x="2" y="2" width="20" height="20" fill="#eef2f5" stroke="#6f8ba1" strokeWidth="1.5" /><rect x="2" y="2" width="20" height="4" fill={steel} /><path d="M4 9h4M10 9h10M4 17h4M10 17h10" stroke="#9db3c4" strokeWidth="1.5" /><path d="M10 13h10M4 13h4" stroke="#e6d544" strokeWidth="3" /></>],
  ["Statistiques basiques...", <><rect x="1" y="1" width="22" height="22" fill="#5b7690" stroke="#4c6579" /><path d="M3 4h18" stroke="#c8d4de" strokeWidth="3" /><g fill="#e6edf3"><path d="M3 8h4v3H3zM8 8h4v3H8zM13 8h4v3h-4zM18 8h3v3h-3zM3 12h4v3H3zM8 12h4v3H8zM13 12h4v3h-4zM18 12h3v3h-3zM3 16h4v2H3zM8 16h4v2H8zM13 16h4v2h-4zM18 16h3v2h-3zM3 19h4v3H3zM8 19h4v3H8zM13 19h4v3h-4zM18 19h3v3h-3z" /></g></>],
  ["Analyse du plus proche voisin...", <><path d="M23 1v6c-6 0-9 2-10 6l4 3-14 2 3-13 3 3c3-5 8-7 14-7z" fill={steel} stroke="#5c7a91" /><ellipse cx="4" cy="21" rx="3.5" ry="2.5" fill="#cfe0ee" stroke="#6f8ba1" /></>],
  ["Coordonnée(s) moyenne(s)...", <><g fill="#6f8da5" stroke="#4c6579" strokeWidth=".7"><path d="M1 9V3l4-2h3v3l2-2v6H5V5L4 9zM15 1h6v5l2 2h-6l2-2h-4zM23 14v6l-4 3v-3h-4l4-5v2zM9 23H3v-4l-2-3h6l-2 2v2h4z" /></g><circle cx="12" cy="12" r="3.5" fill="#a8d4f0" stroke="#7fb0d4" /></>],
  ["Intersections de lignes...", <><path d="M3 2c2 7 10 9 18 8" stroke="#6b8599" strokeWidth="3.5" /><path d="M2 7c4 6 6 12 17 15" stroke="#6a8a6a" strokeWidth="3.5" /><path d="M9 1c1 6 6 9 14 13" stroke="#6b8599" strokeWidth="3" /><path d="M21 2L3 23" stroke="#8a8048" strokeWidth="4" /><path d="M21 2L3 23" stroke="#c3b45c" strokeWidth="2" /></>],
];
const vecteur = [
  ["Dxf2Shp"], ["GPS"], ["Graphes Routiers"], ["OpenStreetMap"], ["Requête Spatiale"], ["Saisie de coordonnées"], ["Vérificateur de topologie"],
  ["Outils d'analyse", "analyse"], ["Outils de recherche", "recherche"], ["Outils de géotraitement", "geo"], ["Outils de géométrie", "geom"], ["Outils de gestion de données", "gestion"],
];
const hot = "bg-linear-to-b from-[#0082e4] to-[#006ac0] text-white";
const popup = "absolute border border-[#8a8a8a] bg-[#f7f7f7] shadow-[4px_4px_3px_-1px_rgba(0,0,0,0.45)]";

function VecteurMenu() {
  return (
    <ul role="menu" className={`top-full left-0 w-[227px] ${popup}`}>
      {vecteur.map(([label, icon]) => (
        <li key={label} role="none" className="relative">
          <button
            type="button"
            role="menuitem"
            className={`flex w-full items-center pl-[2px] pr-[9px] text-left ${icon ? "h-6" : "h-[22px]"} ${icon === "analyse" ? hot : ""}`}
          >
            <span className="flex w-[27px] shrink-0">{icon && <Ic className="h-5 w-5">{menuIcons[icon]}</Ic>}</span>
            <span className="flex-1">{label}</span>
            <svg viewBox="0 0 4 8" className="h-2 w-1" fill="currentColor"><path d="M0 0l4 4-4 4z" /></svg>
          </button>
          {icon === "analyse" && (
            <ul role="menu" className={`left-full top-0 w-[256px] text-[14px] ${popup}`}>
              {subMenu.map(([name, glyph], i) => (
                <li key={name} role="none">
                  <button type="button" role="menuitem" className={`flex h-7 w-full items-center gap-[7px] pl-[2px] text-left text-[14px] ${i === 2 ? hot : ""}`}>
                    <Ic className="h-5 w-5">{glyph}</Ic>
                    {name}
                  </button>
                </li>
              ))}
            </ul>
          )}
        </li>
      ))}
    </ul>
  );
}

const menus = ["Projet", "Éditer", "Vue", "Couche", "Préférences", "Extension", "Vecteur", "Raster", "Base de données", "Internet", "Traitement", "Aide"];

function MenuBar() {
  return (
    <nav className="relative z-20 flex h-6 items-end gap-px pb-px pl-1 text-[12px] leading-4">
      {menus.map((m) => (
        <div key={m} className={m === "Vecteur" ? "relative ml-px" : "relative"}>
          <button type="button" className={`block h-5 border px-[6px] ${m === "Vecteur" ? "border-[#8a8a8a] bg-[#dcdcdc]" : "border-transparent"}`}>{m}</button>
          {m === "Vecteur" && <VecteurMenu />}
        </div>
      ))}
    </nav>
  );
}

const QLogo = ({ className }) => (
  <Ic className={className}>
    <ellipse cx="12" cy="12" rx="7" ry="9.5" stroke="#dbe84f" strokeWidth="5" />
    <path d="M13 14c3 3 4 7 8 8" stroke="#dbe84f" strokeWidth="4" />
    <path d="M3 20C9 17 14 11 18 6l-2-2 7-4-1 8-2-1C16 13 10 19 4 22z" fill="#23872c" />
  </Ic>
);

function TitleBar() {
  const cap = "flex h-[28px] w-[59px] items-center justify-center";
  return (
    <header className={`flex h-[30px] items-start bg-white pl-1 text-[14px] leading-[29px] ${SEGOE}`}>
      <QLogo className="mt-1 h-5 w-4" />
      <h1 className="ml-[7px]">QGIS 2.14.7-Essen</h1>
      <div className="ml-auto flex pr-[3px]">
        <button type="button" aria-label="Réduire" className={cap}><svg viewBox="0 0 12 12" className="h-3 w-3"><path d="M0 5.500h12" stroke="#000" /></svg></button>
        <button type="button" aria-label="Restaurer" className={cap}><svg viewBox="0 0 12 12" className="h-3 w-3" fill="none" stroke="#000"><path d="M.5 2.500h9v9h-9zM2.500 2.500v-2h9v9h-2" /></svg></button>
        <button type="button" aria-label="Fermer la fenêtre" className={cap}><svg viewBox="0 0 12 12" className="h-3 w-3" stroke="#000"><path d="M0 0l12 12M12 0L0 12" /></svg></button>
      </div>
    </header>
  );
}

/* ---------- status bar ---------- */

function StatusBar() {
  return (
    <footer className="flex h-[35px] shrink-0 items-center justify-end pr-4 text-[12px] leading-4">
      <label htmlFor="emprise" className="mr-[6px]">Emprise :</label>
      <input id="emprise" defaultValue="2.22,48.79 : 2.48,48.93" className="h-[22px] w-[298px] rounded-sm border-2 border-[#bebebe] bg-white text-center text-[13px] leading-4" />
      <button type="button" aria-label="Basculer l'affichage" className="flex h-[29px] w-5 items-center justify-center rounded-sm border border-[#8a8a8a] bg-[#dadada]">
        <Ic className="h-4 w-4"><rect x="3" y="3" width="18" height="18" rx="6" stroke="#777" strokeWidth="4" /><rect x="3" y="3" width="18" height="18" rx="6" stroke="#c4c4c4" strokeWidth="2" strokeDasharray="8 5" /></Ic>
      </button>
      <label htmlFor="echelle" className="ml-[9px] mr-3">Échelle</label>
      <span className="relative flex">
        <select id="echelle" className="h-[22px] w-[98px] appearance-none rounded-sm border-2 border-[#bebebe] bg-white px-[3px] text-[12px] leading-4">
          <option>1:40 283</option>
        </select>
        <span className="pointer-events-none absolute inset-y-[2px] right-[2px] flex w-[15px] items-center justify-center border-l border-[#bcbcbc] bg-linear-to-b from-[#fcfcfc] to-[#e4e4e4]"><svg viewBox="0 0 8 5" className="h-[4px] w-[7px]"><path d="M0 0h8L4 5z" /></svg></span>
      </span>
      <label htmlFor="rotation" className="mx-[9px]">Rotation</label>
      <span className="flex h-[29px] w-[108px] rounded-sm border-2 border-[#bebebe] bg-white">
        <input id="rotation" defaultValue="0,0" className="w-0 flex-1 px-[3px] text-[13px]" />
        <span className="flex w-[15px] flex-col border-l border-[#bcbcbc]">
          <button type="button" aria-label="Augmenter" className="flex flex-1 items-center justify-center border-b border-[#bcbcbc]"><svg viewBox="0 0 8 5" className="h-[4px] w-[7px]"><path d="M0 5h8L4 0z" /></svg></button>
          <button type="button" aria-label="Diminuer" className="flex flex-1 items-center justify-center"><svg viewBox="0 0 8 5" className="h-[4px] w-[7px]"><path d="M0 0h8L4 5z" /></svg></button>
        </span>
      </span>
      <span className="ml-[7px] flex"><XCheck id="rendu" label="Rendu" /></span>
      <label htmlFor="rendu" className="ml-[6px]">Rendu</label>
      <button type="button" className="ml-[17px] flex items-center gap-1 text-[13px]">
        <Ic className="h-5 w-5"><circle cx="12" cy="12" r="10.5" fill="#bdbdbd" stroke="#8a8a8a" strokeWidth="2" /><path d="M12 1v22M1 12h22M12 1c-7 6-7 16 0 22M12 1c7 6 7 16 0 22M3 7h18M3 17h18" stroke="#777" /></Ic>
        EPSG:4326
      </button>
      <button type="button" aria-label="Messages" className="ml-6">
        <Ic className="h-5 w-5"><path d="M12 2c7 0 11 4 11 9s-1 5-2 7l2 5c-4 0-5-1-7-3-9 2-15-3-15-9 0-5 4-9 11-9z" fill="#666" /><path d="M6 9h3v3H6zM10.500 9h3v3h-3zM15 9h3v3h-3z" fill="#fff" /></Ic>
      </button>
    </footer>
  );
}

/* ---------- taskbar ---------- */

const apps = [
  ["Explorateur de fichiers", <><path d="M1 3h9l2 2h11v17H1z" fill="#e5a614" /><path d="M1 6h22v15H1z" fill="#fcd36b" /><path d="M5 23v-10h14v10h-4v-6H9v6z" fill="#3f93d8" /></>],
  ["Firefox", <><path d="M12 23C4 23 0 17 1 11c0-3 2-5 2-7l3 3c1-1 3-1 4-1 1-2 2-4 4-6 1 3 2 4 4 5l1-2c3 4 4 7 4 10 0 6-4 10-11 10z" fill="#1b9df0" /><path d="M2 12c0 7 5 11 11 10 6 0 9-5 9-10-3 5-6 6-9 5-5 1-8-1-11-5z" fill="#0b63d8" /><path d="M14 1c-1 4 5 5 6 10 0 3-1 5-3 6 1-5-5-6-5-10 0-3 1-4 2-6z" fill="#54cdf8" /><circle cx="11" cy="12" r="4" fill="#2a2f8f" /></>],
  ["Bloc-notes", <><path d="M20 3l3 1-2 17-5 2z" fill="#9a7b45" /><path d="M9 1h12l-3 21H6z" fill="#dbe9ee" stroke="#aab" strokeWidth=".5" /><path d="M8 2h11L12 20H1z" fill="#6fb0bd" /><path d="M8 2h11l-4 10c-4 0-8 1-11 2z" fill="#a9d3da" /></>],
  ["QGIS", null],
  ["Mathematica", <><rect width="24" height="24" fill="#dd1100" /><path d="M12 2l2 3.500 4-1.500-.5 4 4 1-2.500 3 2.500 3-4 1 .5 4-4-1.500L12 22l-2-3.500L6 20l.5-4-4-1L5 12 2.500 9l4-1L6 4l4 1.500z" fill="#fff" /><path d="M8 8l4 2 4-2-1 5 2 3-4-1-1 3-1-3-4 1 2-3z" stroke="#dd1100" strokeWidth="1.1" /></>],
  ["Paint", <><path d="M2 14C1 8 7 3 13 4c6 0 9 5 7 11-2 6-8 9-12 7-3-2 0-4-2-5s-3 0-4-3z" fill="#bcd7ec" stroke="#87a9c4" /><circle cx="5" cy="13" r="1.7" fill="#d33" /><circle cx="8" cy="8" r="1.8" fill="#58b04b" /><circle cx="13" cy="7" r="2" fill="#f0c52f" /><circle cx="11" cy="14" r="1.8" fill="#1c1c1c" /><path d="M12 23L21 5" stroke="#dd8a33" strokeWidth="2" /><path d="M19 1l4 1-1 5-3 0z" fill="#c9a070" /></>],
  ["Notepad++", <><path d="M2 1h16v21H2z" fill="#f5f5f5" stroke="#aaa" /><path d="M3 12c4-2 10 1 15-1v10H2z" fill="#63c332" /><path d="M4 1v2M7 1v2M10 1v2M13 1v2" stroke="#888" /><path d="M5 9c2-3 8-4 9-1M4 13c3-3 8-4 10-2s-2 3-4 2M6 16c-2-1-1-4 1-4M9 18h6" stroke="#1d5a1d" strokeWidth="1.5" /><path d="M22 1l-5 17" stroke="#e0952e" strokeWidth="2" /></>],
];

function Taskbar() {
  return (
    <div className={`flex h-[50px] shrink-0 items-stretch bg-[linear-gradient(90deg,#1c1c1c_0%,#1c1c1c_38%,#2a2024_50%,#33251c_63%,#33251c_66%,#1d1c1b_72%,#1c1c1c_100%)] text-white ${SEGOE}`}>
      <button type="button" aria-label="Démarrer" className="flex w-[60px] items-center justify-center"><svg viewBox="0 0 20 20" className="h-5 w-5" fill="#fff"><path d="M0 3l8-1v7H0zM9 2l11-2v9H9zM0 10h8v8l-8-1zM9 10h11v10L9 18z" /></svg></button>
      <button type="button" aria-label="Vue des tâches" className="flex w-[63px] items-center justify-center"><svg viewBox="0 0 20 20" className="h-5 w-5" fill="none" stroke="#fff" strokeWidth="1.3"><path d="M1 0v3h11V0M1 6h11v8H1zM1 20v-3h11v3M18 0v3M18 11v9" /><path d="M16.500 6h3v3h-3z" fill="#fff" stroke="none" /></svg></button>
      {apps.map(([name, glyph], i) => (
        <button key={name} type="button" aria-label={name} className={`flex w-[62px] flex-col items-center ${i === 3 ? "bg-[#4b4b4b]" : ""}`}>
          <span className="flex flex-1 items-center">{glyph ? <Ic className="h-7 w-7">{glyph}</Ic> : <QLogo className="h-7 w-6" />}</span>
          <span className={i === 3 ? "h-[3px] w-full bg-[#76b5ee]" : i === 0 ? "h-[3px] w-[51px] border-r-[11px] border-[#5985ad] bg-[#76b5ee]" : "h-[3px] w-[51px] bg-[#76b5ee]"} />
        </button>
      ))}
      <div className="ml-auto flex items-center">
        <button type="button" className="flex items-center text-[17px]">
          <span className="relative mr-[10px] h-[29px] w-7">
            <svg viewBox="0 0 28 29" className="h-[29px] w-7"><path d="M1 18c8 4 16 0 17-10 6-1 9 3 9 8 0 8-6 13-13 13C7 29 2 25 1 18z" fill="#f7a527" /></svg>
            <span className="absolute top-0 right-0 flex h-[15px] w-[15px] items-center justify-center rounded-full bg-[#c42b1c] text-[11px] leading-none">1</span>
          </span>
          <span className="mr-[10px]">9°C</span>
          <span>Temps dégagé</span>
        </button>
        <button type="button" aria-label="Icônes cachées" className="ml-8"><svg viewBox="0 0 16 10" className="h-[10px] w-4" fill="none" stroke="#fff" strokeWidth="1.3"><path d="M0 9l8-8 8 8" /></svg></button>
        <svg viewBox="0 0 20 14" className="ml-3 h-[14px] w-5" fill="none" stroke="#fff"><path d="M5 3.500h13v9H4v-4" /><path d="M6 5h10v6H6z" fill="#fff" stroke="none" /><path d="M19 6v4" /><path d="M0 3h4v2H0zM1 3V0M3 3V0M2 5v3h2" /></svg>
        <svg viewBox="0 0 22 18" className="ml-[9px] h-[18px] w-[22px]" fill="none" stroke="#fff" strokeWidth="1.2"><path d="M1 6h3l4-4v14l-4-4H1zM11 7c1 1 1 3 0 4M14 4c3 3 3 7 0 10M17 1c4 5 4 11 0 16" /></svg>
        <svg viewBox="0 0 16 16" className="ml-3 h-4 w-4" fill="none" stroke="#fff" strokeWidth="1.2"><path d="M1 15C1 7 7 1 15 1" stroke="#888" /><path d="M4 15C4 9 9 4 15 4M7 15c0-4 4-8 8-8M10 15c0-3 2-5 5-5" /><circle cx="14" cy="14" r="1.7" fill="#fff" stroke="none" /></svg>
        <button type="button" className="ml-[13px] flex flex-col items-center text-[14px] leading-[23px]"><span>20:38</span><span>24/02/2025</span></button>
        <button type="button" aria-label="Notifications" className="ml-6"><svg viewBox="0 0 20 20" className="h-5 w-5" fill="none" stroke="#fff" strokeWidth="1.2"><path d="M1 1h18v14h-6l-3 3-3-3H1z" /></svg></button>
        <span className="ml-[25px] h-[50px] w-[6px] border-l border-[#777]" />
      </div>
    </div>
  );
}

export default function App() {
  return (
    <div className={`flex h-screen flex-col overflow-hidden bg-[#efefef] text-black ${UI}`}>
      <PatternDefs />
      <TitleBar />
      <MenuBar />
      <ToolbarOne />
      <ToolbarTwo />
      <div className="flex min-h-0 flex-1">
        <SideBar />
        <Docks />
        <div className="flex w-[6px] shrink-0 justify-center pt-[287px]"><Fill id="dots" className="h-[283px] w-[3px]" /></div>
        <MapCanvas />
      </div>
      <StatusBar />
      <Taskbar />
    </div>
  );
}
